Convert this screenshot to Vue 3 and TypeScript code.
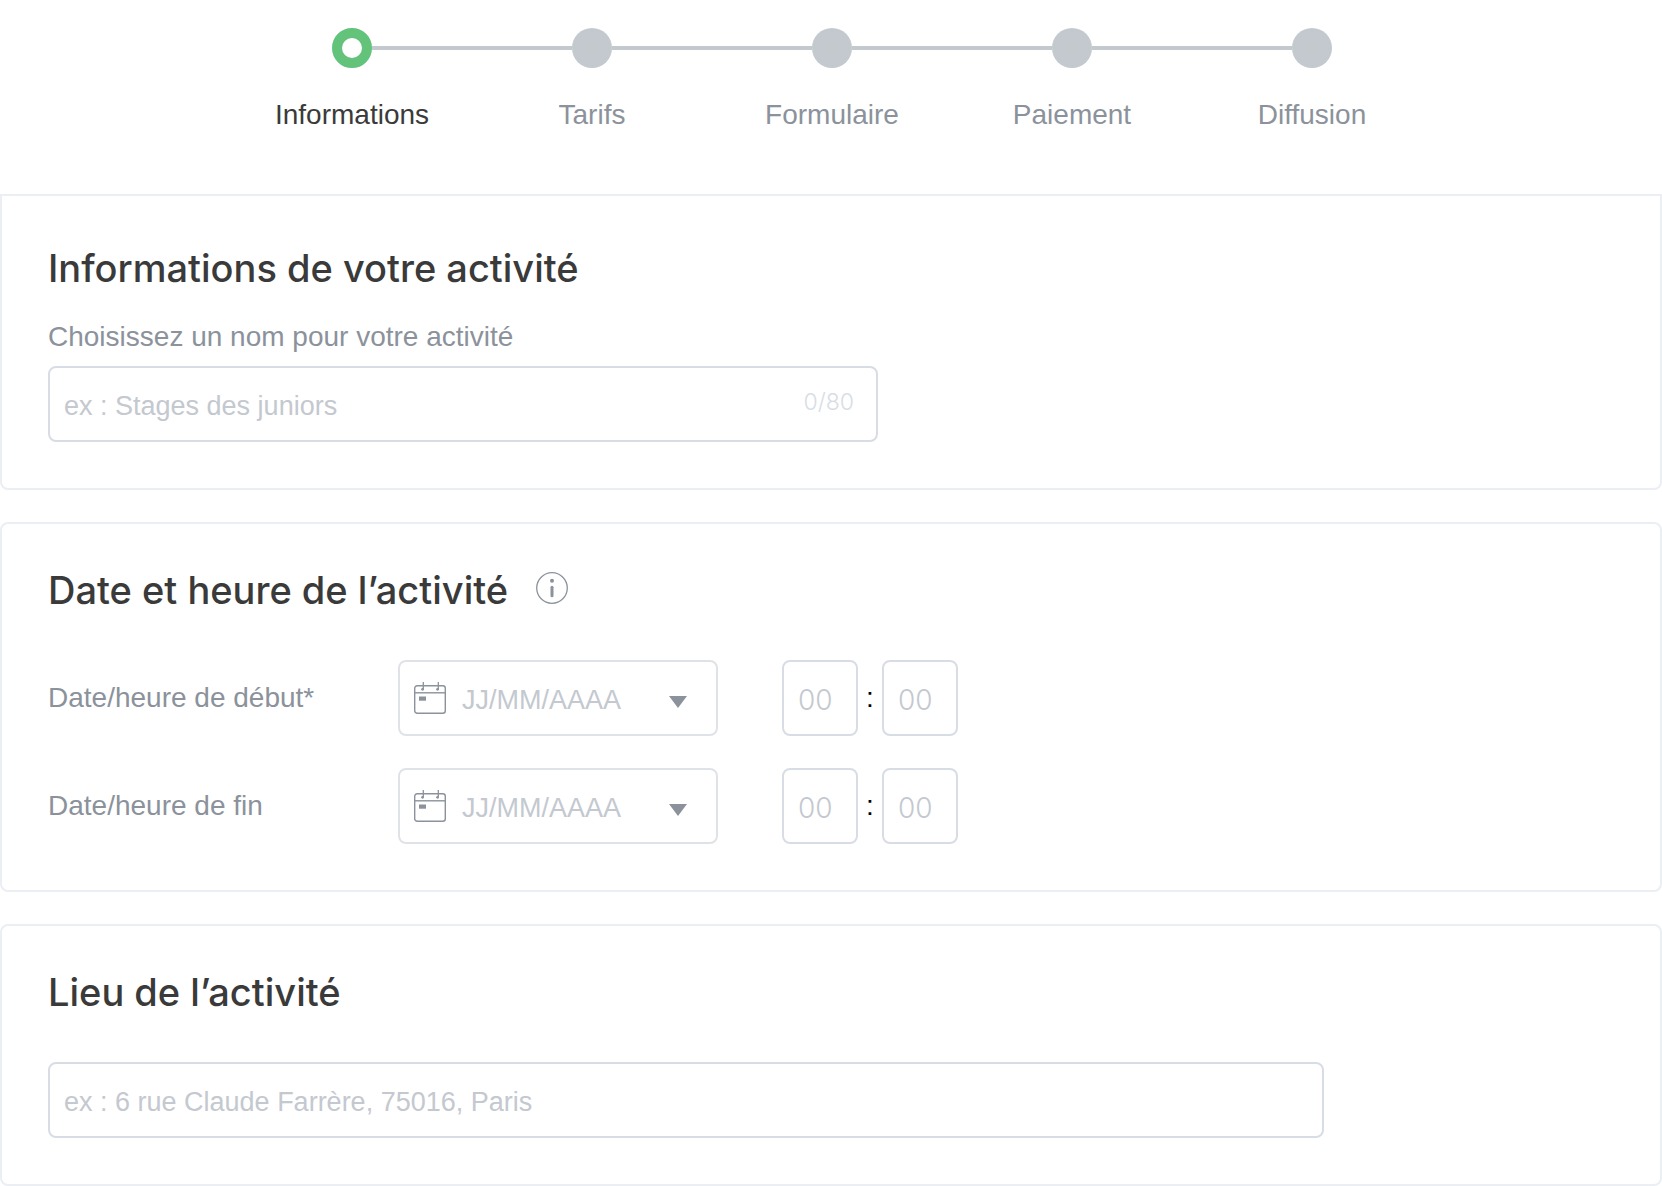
<script setup lang="ts">
import { ref } from 'vue'

interface DateRow {
  id: string
  label: string
  date: string
  hours: string
  minutes: string
}

const steps: string[] = ['Informations', 'Tarifs', 'Formulaire', 'Paiement', 'Diffusion']
const current = 0

const maxLength = 80
const name = ref('')
const place = ref('')

const rows = ref<DateRow[]>([
  { id: 'start', label: 'Date/heure de début*', date: '', hours: '', minutes: '' },
  { id: 'end', label: 'Date/heure de fin', date: '', hours: '', minutes: '' },
])
</script>

<template>
  <main class="page">
    <ol class="stepper">
      <li
        v-for="(step, i) in steps"
        :key="step"
        class="step"
        :class="{ active: i === current }"
        :aria-current="i === current ? 'step' : undefined"
      >
        <div class="marker">
          <span class="line" :class="{ hidden: i === 0 }"></span>
          <span class="dot"></span>
          <span class="line" :class="{ hidden: i === steps.length - 1 }"></span>
        </div>
        <span class="step-label">{{ step }}</span>
      </li>
    </ol>

    <form class="cards" @submit.prevent>
      <section class="card card-first">
        <h2>Informations de votre activité</h2>
        <label class="label name-label" for="name">Choisissez un nom pour votre activité</label>
        <div class="field name-field">
          <input id="name" v-model="name" type="text" placeholder="ex : Stages des juniors" :maxlength="maxLength" />
          <span class="counter">{{ name.length }}/{{ maxLength }}</span>
        </div>
      </section>

      <section class="card">
        <div class="title">
          <h2>Date et heure de l’activité</h2>
          <button class="info" type="button" aria-label="Aide">
            <svg viewBox="0 0 32 32" width="32" height="32">
              <circle cx="16" cy="16" r="15.3" fill="none" stroke="#8b929b" stroke-width="1.3" />
              <circle cx="16" cy="8.8" r="2" fill="#8b929b" />
              <path d="M16 15.2v8.6" stroke="#8b929b" stroke-width="3" stroke-linecap="round" />
            </svg>
          </button>
        </div>
        <div class="rows">
          <div v-for="row in rows" :key="row.id" class="row">
            <label class="label row-label" :for="row.id">{{ row.label }}</label>
            <div class="field date-field">
              <svg class="calendar" viewBox="0 0 32 32" width="32" height="32" fill="none" stroke="#8b929b">
                <rect x="0.7" y="3.7" width="30.6" height="27.6" rx="2.5" stroke-width="1.4" />
                <path d="M1 10.8h30" stroke-width="1.4" />
                <path d="M9.3 0v7.5M24.3 0v7.5" stroke-width="1.3" />
                <circle cx="8.6" cy="7.3" r="1.4" fill="#8b929b" stroke="none" />
                <circle cx="23.6" cy="7.3" r="1.4" fill="#8b929b" stroke="none" />
                <rect x="5" y="14.5" width="7" height="4.2" fill="#8b929b" stroke="none" />
              </svg>
              <input :id="row.id" v-model="row.date" type="text" placeholder="JJ/MM/AAAA" />
              <button class="toggle" type="button" aria-label="Ouvrir le calendrier">
                <svg viewBox="0 0 18 12" width="18" height="12">
                  <path d="M0 0h18L9 12z" fill="#8b929b" />
                </svg>
              </button>
            </div>
            <div class="time">
              <div class="field time-field">
                <input v-model="row.hours" type="text" placeholder="00" aria-label="Heures" maxlength="2" />
              </div>
              <span class="colon">:</span>
              <div class="field time-field">
                <input v-model="row.minutes" type="text" placeholder="00" aria-label="Minutes" maxlength="2" />
              </div>
            </div>
          </div>
        </div>
      </section>

      <section class="card">
        <div class="title">
          <h2 id="place-title">Lieu de l’activité</h2>
        </div>
        <div class="field place-field">
          <input
            v-model="place"
            type="text"
            aria-labelledby="place-title"
            placeholder="ex : 6 rue Claude Farrère, 75016, Paris"
          />
        </div>
      </section>
    </form>
  </main>
</template>

<style>
body {
  margin: 0;
  background: #fff;
}
</style>

<style scoped>
* {
  box-sizing: border-box;
}

.page {
  font-family: 'Liberation Sans', Arial, sans-serif;
  font-size: 28px;
  line-height: 40px;
  color: #3a3a3a;
}

.stepper {
  display: flex;
  justify-content: center;
  margin: 0;
  padding: 28px 0 59px 2px;
  list-style: none;
}

.step {
  flex: 0 1 240px;
  display: flex;
  flex-direction: column;
  gap: 27px;
  color: #8b929b;
  text-align: center;
}

.step.active {
  color: #3a3a3a;
}

.marker {
  display: flex;
  align-items: center;
}

.line {
  flex: 1;
  height: 4px;
  background: #c4c8cf;
}

.line.hidden {
  visibility: hidden;
}

.dot {
  width: 40px;
  height: 40px;
  border-radius: 50%;
  background: #c4c8cf;
}

.active .dot {
  border: 10px solid #64c37b;
  background: #fff;
}

.cards {
  display: flex;
  flex-direction: column;
  gap: 32px;
}

.card {
  padding: 42px 46px 46px;
  border: 2px solid #ebeef2;
  border-radius: 8px;
}

.card-first {
  padding-top: 48px;
  border-radius: 0 0 8px 8px;
}

h2 {
  margin: 0;
  font-family: Inter, 'Liberation Sans', sans-serif;
  font-size: 38px;
  line-height: 48px;
  font-weight: 500;
}

.title {
  display: flex;
  align-items: center;
  gap: 28px;
  margin-bottom: 46px;
}

.info,
.toggle {
  display: flex;
  padding: 0;
  border: 0;
  background: none;
  cursor: pointer;
}

.info {
  padding-bottom: 4px;
}

.label {
  color: #8b929b;
}

.name-label {
  display: block;
  margin: 25px 0 9px;
}

.field {
  display: flex;
  align-items: center;
  height: 76px;
  padding: 0 14px;
  border: 2px solid #d8dde5;
  border-radius: 8px;
  background: #fff;
  font-size: 27px;
}

input {
  flex: 1;
  width: 100%;
  min-width: 0;
  padding: 4px 0 0;
  border: 0;
  outline: 0;
  background: none;
  font: inherit;
  color: #3a3a3a;
}

input::placeholder {
  color: #c4c8cf;
  opacity: 1;
}

.name-field {
  max-width: 830px;
  padding-right: 22px;
}

.counter {
  padding-bottom: 4px;
  font-family: Inter, 'Liberation Sans', sans-serif;
  font-size: 23px;
  font-weight: 300;
  color: #d8dde5;
}

.rows {
  display: flex;
  flex-direction: column;
  gap: 32px;
}

.row {
  display: flex;
  align-items: center;
}

.row-label {
  flex: 0 0 350px;
}

.date-field {
  flex: 0 1 320px;
  gap: 16px;
  padding-right: 29px;
  border-color: #dfe3e8;
}

.calendar {
  flex: none;
}

.toggle {
  padding-top: 8px;
}

.time {
  display: flex;
  align-items: center;
  margin-left: 64px;
}

.time-field {
  width: 76px;
  font-family: Inter, 'Liberation Sans', sans-serif;
  font-size: 28px;
  font-weight: 300;
}

.colon {
  width: 24px;
  color: #000;
  text-align: center;
}

.place-field {
  max-width: 1276px;
}
</style>
